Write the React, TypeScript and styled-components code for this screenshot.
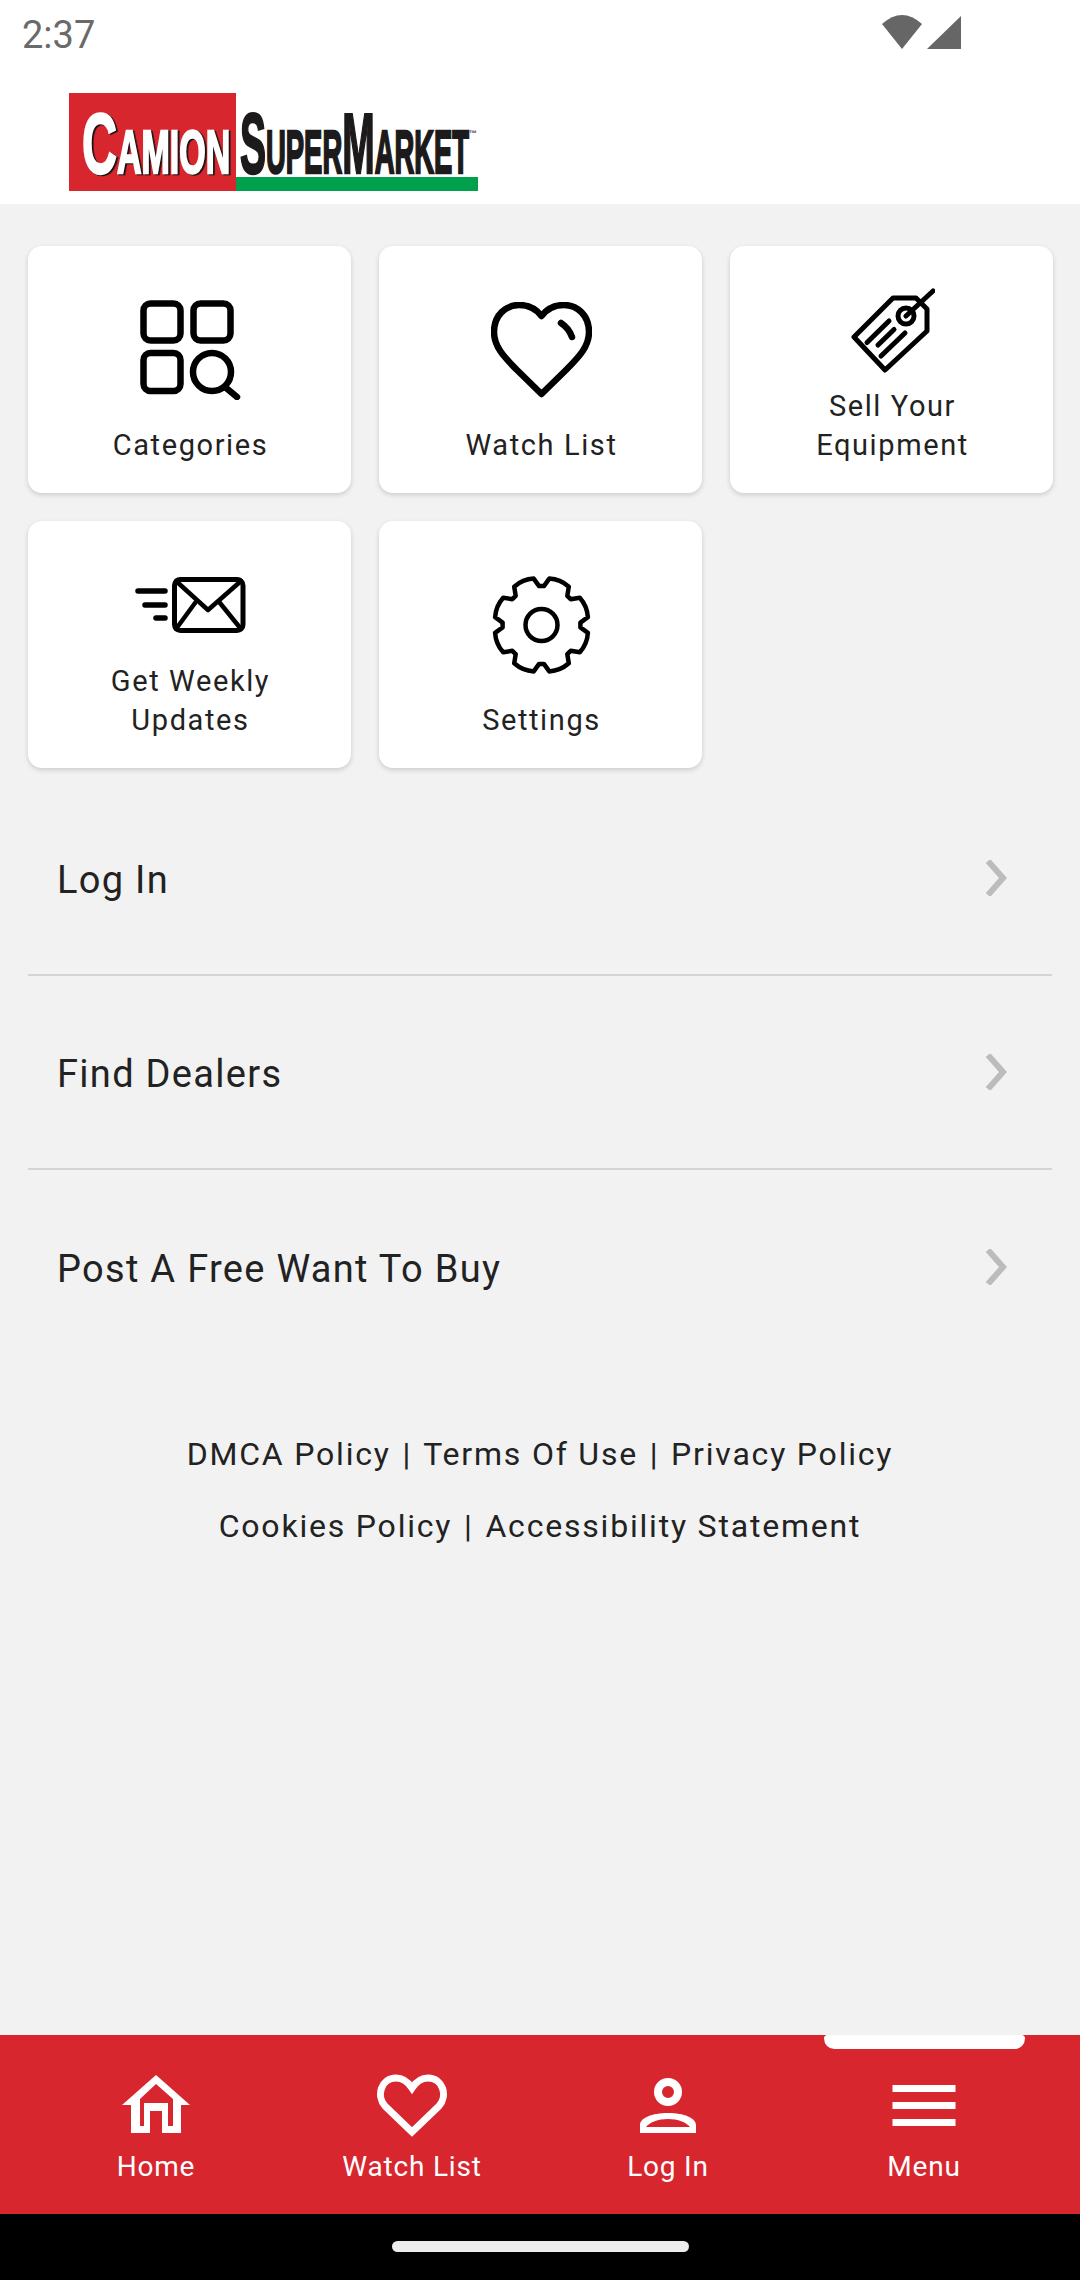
import React from 'react';
import styled, { createGlobalStyle } from 'styled-components';

const GlobalStyle = createGlobalStyle`
  html, body {
    margin: 0;
    padding: 0;
    background: #f2f2f2;
  }
  * {
    box-sizing: border-box;
  }
`;

const Screen = styled.div`
  display: flex;
  flex-direction: column;
  width: 1080px;
  height: 2280px;
  overflow: hidden;
  font-family: Roboto, "Liberation Sans", sans-serif;
  color: #222;
`;

const StatusBar = styled.div`
  display: flex;
  justify-content: space-between;
  align-items: flex-start;
  height: 80px;
  padding: 15px 118px 0 22px;
  background: #fff;
`;

const Time = styled.span`
  font-size: 38px;
  line-height: 40px;
  color: #6a6a6a;
`;

const Header = styled.header`
  height: 124px;
  padding: 13px 0 0 69px;
  background: #fff;
`;

const Main = styled.main`
  flex: 1;
  padding: 41.5px 28px 0;
  background: #f2f2f2;
`;

const Tiles = styled.div`
  display: grid;
  grid-template-columns: repeat(3, 323px);
  grid-auto-rows: 247.5px;
  column-gap: 28px;
  row-gap: 27.5px;
`;

const Tile = styled.div`
  display: flex;
  flex-direction: column;
  align-items: center;
  padding: 28px;
  background: #fff;
  border-radius: 14px;
  box-shadow: 0 2px 5px rgba(0, 0, 0, 0.16);
`;

const TileIcon = styled.div`
  flex: 1;
  display: flex;
  align-items: center;
  justify-content: center;
  padding-left: 2px;
`;

const TileLabel = styled.div`
  padding-left: 2px;
  font-size: 29px;
  line-height: 39px;
  letter-spacing: 1.6px;
  text-align: center;
  white-space: pre-line;
`;

const MenuList = styled.div`
  margin-top: 14px;
`;

const MenuRow = styled.div`
  display: flex;
  align-items: center;
  justify-content: space-between;
  height: 194px;
  padding: 0 45px 0 29px;
  font-size: 38px;
  letter-spacing: 1.3px;
  border-bottom: 2px solid #d4d4d4;

  &:last-child {
    border-bottom: none;
  }
`;

const MenuText = styled.span`
  padding-top: 3px;
`;

const FooterLinks = styled.div`
  margin-top: 54px;
  text-align: center;
  font-size: 32px;
  line-height: 72px;
  letter-spacing: 1.8px;
`;

const Separator = styled.span`
  margin: 0 2px;
`;

const NavBar = styled.nav`
  position: relative;
  display: grid;
  grid-template-columns: repeat(4, 1fr);
  height: 179px;
  padding: 39px 28px 0;
  background: #d8262f;
`;

const Indicator = styled.div`
  position: absolute;
  top: 0;
  left: 824px;
  width: 201px;
  height: 14px;
  background: #fff;
  border-radius: 4px 4px 12px 12px;
`;

const NavItem = styled.div`
  display: flex;
  flex-direction: column;
  align-items: center;
  color: #fff;
`;

const NavLabel = styled.span`
  margin-top: 11px;
  font-size: 28px;
  line-height: 36px;
  letter-spacing: 0.8px;
`;

const GestureBar = styled.div`
  display: flex;
  justify-content: center;
  height: 66px;
  padding-top: 27px;
  background: #000;
`;

const GesturePill = styled.div`
  width: 297px;
  height: 11px;
  border-radius: 6px;
  background: #ececec;
`;

const LogoWord = styled.text`
  font-family: "Liberation Sans", sans-serif;
  font-size: 86px;
  font-weight: 700;
  font-variant: small-caps;
  stroke-width: 2.4px;
`;

const StatusIcons = () => (
  <svg width="80" height="35" viewBox="0 0 80 35" fill="#666">
    <path d="M0 9 Q20 -9 40 9 L20 34 Z" />
    <path d="M45 34 L79 1 V34 Z" />
  </svg>
);

const Logo = () => (
  <svg width="409" height="98" viewBox="0 0 409 98" role="img" aria-label="Camion SuperMarket">
    <rect width="167" height="98" fill="#d8262f" />
    <rect x="167" y="84" width="242" height="14" fill="#00a04d" />
    <LogoWord
      transform="translate(13 80) scale(0.563 1)"
      fill="#fff"
      stroke="#fff"
      style={{ filter: 'drop-shadow(3px 1px 0 #111)' }}
    >
      Camion
    </LogoWord>
    <LogoWord transform="translate(171 80) scale(0.453 1)" fill="#1c1a1b" stroke="#1c1a1b">
      SuperMarket
    </LogoWord>
    <text x="400" y="43" fontSize="8" fontWeight="700" fontFamily="'Liberation Sans', sans-serif" fill="#444">
      ™
    </text>
  </svg>
);

const CategoriesIcon = () => (
  <svg width="101" height="100" viewBox="0 0 101 100" fill="none" stroke="#000" strokeWidth="6.5" strokeLinecap="round">
    <rect x="3.5" y="3.5" width="37" height="37" rx="7" />
    <rect x="53.5" y="3.5" width="37" height="37" rx="7" />
    <rect x="3.5" y="53" width="37" height="38" rx="7" />
    <circle cx="72" cy="72" r="19" />
    <path d="M85 87 L97 97" />
  </svg>
);

const HeartIcon = () => (
  <svg width="101" height="96" viewBox="0 0 101 96" fill="none" stroke="#000" strokeWidth="6.5" strokeLinecap="round" strokeLinejoin="round">
    <path d="M50.5 92 L26 68 C12 54 3 44 3 30 C3 13 15 3 28 3 C38 3 46 8 50.5 14 C55 8 63 3 73 3 C86 3 98 13 98 30 C98 44 89 54 75 68 Z" />
    <path d="M70 21 C76 25 79 29 81 35" />
  </svg>
);

const TagIcon = () => (
  <svg width="84" height="85" viewBox="0 0 84 85" fill="none" stroke="#000" strokeWidth="5" strokeLinecap="round" strokeLinejoin="round">
    <path d="M3 49 L42 10 L65 10 L76 21 L76 43 L34 82 Z" />
    <circle cx="55" cy="28" r="8" />
    <path d="M55 28 L82 3" />
    <path d="M16 54.5 L38 33" />
    <path d="M27 57 L43 41.5" />
    <path d="M30 68 L54 45" />
  </svg>
);

const MailIcon = () => (
  <svg width="111" height="56" viewBox="0 0 111 56" fill="none" stroke="#000" strokeWidth="4.5" strokeLinecap="round" strokeLinejoin="round">
    <rect x="39.5" y="2.5" width="68.5" height="51" rx="6" strokeWidth="5" />
    <path d="M41 4 L73 33 L106 4" />
    <path d="M41 52 L60 26" />
    <path d="M106 52 L85 26" />
    <path d="M3 14 H30 M10 28 H30 M21 41 H30" strokeWidth="5.5" />
  </svg>
);

// eight teeth with a notch on the vertical axis
const gearPath = (() => {
  const pt = (r: number, deg: number) => {
    const a = ((deg - 90) * Math.PI) / 180;
    return `${(50.5 + r * Math.cos(a)).toFixed(1)} ${(51 + r * Math.sin(a)).toFixed(1)}`;
  };
  let d = '';
  for (let i = 0; i < 8; i++) {
    const c = 22.5 + i * 45;
    d += `${i ? 'L' : 'M'}${pt(39, c - 19)} L${pt(47, c - 13)} Q${pt(49.5, c)} ${pt(47, c + 13)} L${pt(39, c + 19)} `;
  }
  return `${d}Z`;
})();

const GearIcon = () => (
  <svg width="101" height="102" viewBox="0 0 101 102" fill="none" stroke="#000" strokeWidth="4.5" strokeLinejoin="round">
    <path d={gearPath} />
    <circle cx="50.5" cy="51" r="16" />
  </svg>
);

const Chevron = () => (
  <svg width="22" height="36" viewBox="0 0 22 36" fill="none" stroke="#bcbcbc" strokeWidth="6">
    <path d="M3 1 L18 18 L3 35" />
  </svg>
);

const NavHome = () => (
  <svg width="70" height="64" viewBox="0 0 70 64" fill="#fff" fillRule="evenodd">
    <path d="M35 1 L69 31 H60 V59 H41 V37 H29 V59 H10 V31 H1 Z M35 10 L52 25 V52 H47 V29 H23 V52 H19 V25 Z" />
  </svg>
);

const NavHeart = () => (
  <svg width="70" height="64" viewBox="0 0 70 64" fill="none" stroke="#fff" strokeWidth="7">
    <path d="M35 58 L8 32 C-1 22 4 4 19 4 C26 4 31 8 35 14 C39 8 44 4 51 4 C66 4 71 22 62 32 Z" />
  </svg>
);

const NavPerson = () => (
  <svg width="70" height="64" viewBox="0 0 70 64" fill="#fff" fillRule="evenodd">
    <circle cx="35" cy="18" r="10" fill="none" stroke="#fff" strokeWidth="8" />
    <path d="M7 59 V51 C7 44 19 39 35 39 C51 39 63 44 63 51 V59 Z M13 53 H57 C53 48 45 45 35 45 C25 45 17 48 13 53 Z" />
  </svg>
);

const NavMenu = () => (
  <svg width="70" height="64" viewBox="0 0 70 64" fill="#fff">
    <rect x="3.5" y="11" width="63" height="7" />
    <rect x="3.5" y="28" width="63" height="7" />
    <rect x="3.5" y="45" width="63" height="7" />
  </svg>
);

const tiles = [
  { label: 'Categories', icon: <CategoriesIcon /> },
  { label: 'Watch List', icon: <HeartIcon /> },
  { label: 'Sell Your\nEquipment', icon: <TagIcon /> },
  { label: 'Get Weekly\nUpdates', icon: <MailIcon /> },
  { label: 'Settings', icon: <GearIcon /> },
];

const menuRows = ['Log In', 'Find Dealers', 'Post A Free Want To Buy'];

const navItems = [
  { label: 'Home', icon: <NavHome /> },
  { label: 'Watch List', icon: <NavHeart /> },
  { label: 'Log In', icon: <NavPerson /> },
  { label: 'Menu', icon: <NavMenu /> },
];

export default function App() {
  return (
    <Screen>
      <GlobalStyle />
      <StatusBar>
        <Time>2:37</Time>
        <StatusIcons />
      </StatusBar>
      <Header>
        <Logo />
      </Header>
      <Main>
        <Tiles>
          {tiles.map((t) => (
            <Tile key={t.label}>
              <TileIcon>{t.icon}</TileIcon>
              <TileLabel>{t.label}</TileLabel>
            </Tile>
          ))}
        </Tiles>
        <MenuList>
          {menuRows.map((r) => (
            <MenuRow key={r}>
              <MenuText>{r}</MenuText>
              <Chevron />
            </MenuRow>
          ))}
        </MenuList>
        <FooterLinks>
          <div>
            DMCA Policy <Separator>|</Separator> Terms Of Use <Separator>|</Separator> Privacy Policy
          </div>
          <div>
            Cookies Policy <Separator>|</Separator> Accessibility Statement
          </div>
        </FooterLinks>
      </Main>
      <NavBar>
        <Indicator />
        {navItems.map((n) => (
          <NavItem key={n.label}>
            {n.icon}
            <NavLabel>{n.label}</NavLabel>
          </NavItem>
        ))}
      </NavBar>
      <GestureBar>
        <GesturePill />
      </GestureBar>
    </Screen>
  );
}
